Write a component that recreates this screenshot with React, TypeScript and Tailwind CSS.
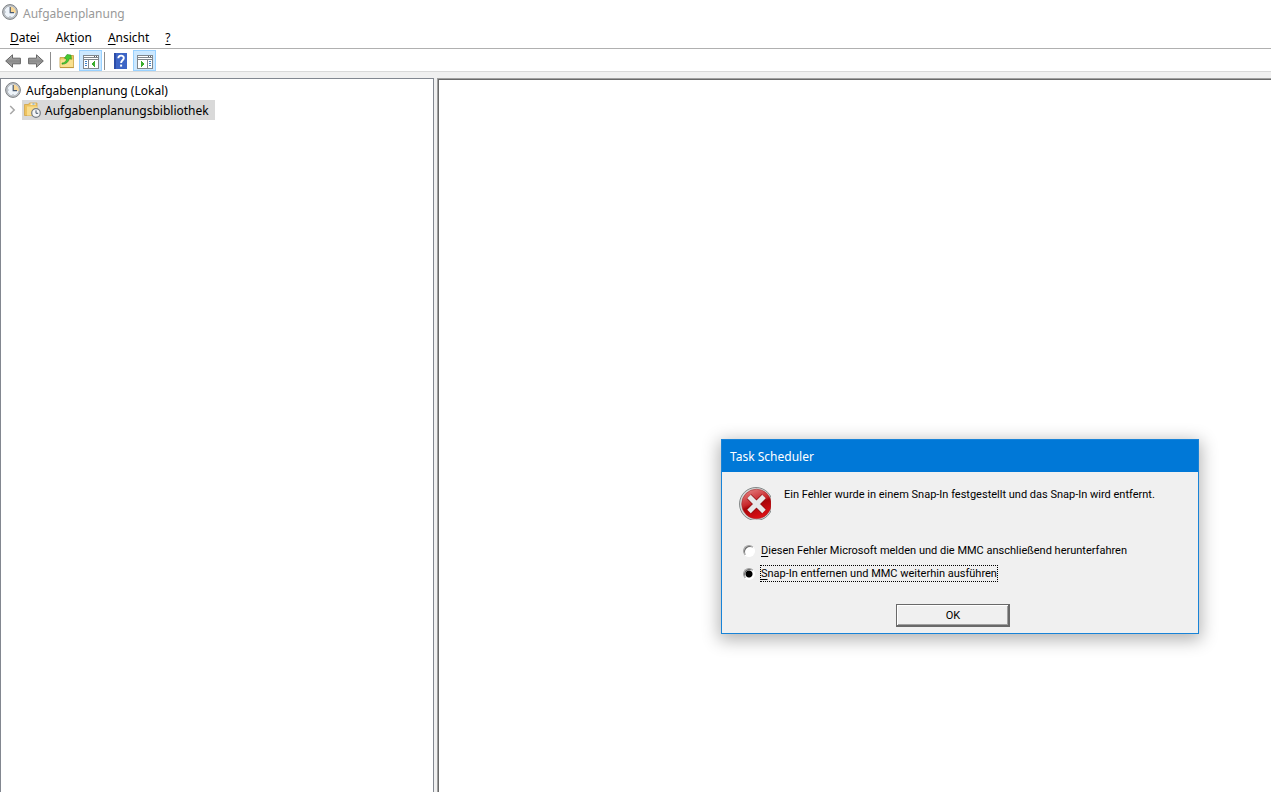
import { useState } from 'react'
import type { ReactNode } from 'react'

function ClockFace({ className }: { className?: string }) {
  return (
    <svg viewBox="0 0 16 16" className={className} aria-hidden="true">
      <circle cx="8" cy="8" r="7.4" fill="#c3c7ca" stroke="#7d8185" strokeWidth="1" />
      <circle cx="8" cy="8" r="5.9" fill="#eef4fa" stroke="#9aa0a6" strokeWidth="0.6" />
      <path d="M8 9V2.4A5.8 5.8 0 0 1 13.7 9Z" fill="#f9d796" />
      <path d="M8.2 3v5.7h3.8" fill="none" stroke="#4a5a70" strokeWidth="1.2" />
      <path d="M8 12.2v1M2.7 8h1" stroke="#7d858d" strokeWidth="0.8" />
    </svg>
  )
}

function ArrowIcon({ flip }: { flip?: boolean }) {
  return (
    <svg viewBox="0 0 16 14" className={flip ? 'w-4 h-3.5 -scale-x-100' : 'w-4 h-3.5'} aria-hidden="true">
      <defs>
        <linearGradient id="arrow" x1="0" y1="0" x2="0" y2="1">
          <stop offset="0" stopColor="#c4c4c4" />
          <stop offset="0.5" stopColor="#8a8a8a" />
          <stop offset="1" stopColor="#b0b0b0" />
        </linearGradient>
      </defs>
      <path d="M0.7 7L7.5 0.8V4.2H15.4V9.8H7.5V13.2Z" fill="url(#arrow)" stroke="#666" strokeWidth="1" />
    </svg>
  )
}

function FolderUpIcon() {
  return (
    <svg viewBox="0 0 16 16" className="w-4 h-4" aria-hidden="true">
      <path d="M1 4.5h6l1-2h6.5v12H1Z" fill="#ecc762" stroke="#c39a3a" strokeWidth="0.8" />
      <path d="M1.4 6.5h12.8v7.6H1.4Z" fill="#f9e08f" />
      <path d="M1 14.6h13.8" stroke="#b98f35" strokeWidth="0.8" />
      <path d="M3 10c2.6 0 4-1.4 4.6-4L5.4 5.2 8 1.5l4 .6.4 4.2-2-.8C9.6 9 7.2 11.2 3 11.2Z" fill="#45c932" stroke="#2c9422" strokeWidth="0.6" />
    </svg>
  )
}

function PaneIcon({ side }: { side: 'left' | 'right' }) {
  return (
    <svg viewBox="0 0 16 14" className="w-4 h-3.5" shapeRendering="crispEdges" aria-hidden="true">
      <path d="M0 0h16v14H0Z" fill="#80868c" />
      <path d="M1 1h14v1H1ZM1 3h14v1H1Z" fill="#fff" />
      <path d="M11 1h1v1h-1ZM13 1h1v1h-1Z" fill="#5b6168" />
      {side === 'left' ? (
        <>
          <path d="M1 5h4v8H1ZM6 5h9v8H6Z" fill="#fff" />
          <path d="M2 6h2v1H2ZM2 8h2v1H2ZM2 10h2v1H2Z" fill="#3e82c8" />
          <path d="M12 6v6L8 9Z" fill="#39ad2c" />
        </>
      ) : (
        <>
          <path d="M1 5h9v8H1ZM11 5h4v8h-4Z" fill="#fff" />
          <path d="M12 6h2v1h-2ZM12 8h2v1h-2ZM12 10h2v1h-2Z" fill="#3e82c8" />
          <path d="M4 6v6L8 9Z" fill="#39ad2c" />
        </>
      )}
    </svg>
  )
}

function HelpIcon() {
  return (
    <svg viewBox="0 0 13 16" className="w-[13px] h-4" aria-hidden="true">
      <path d="M0 0h13v16H0Z" fill="#2c4da8" />
      <path d="M2 0h11v16H2Z" fill="#3d65c6" />
      <path d="M4.3 5.2C4.4 1.9 9.8 1.8 9.8 5c0 2.2-2.7 2.3-2.7 5" fill="none" stroke="#fff" strokeWidth="1.9" />
      <path d="M6.1 11.6h2v2h-2Z" fill="#fff" />
    </svg>
  )
}

function LibraryIcon() {
  return (
    <svg viewBox="0 0 17 16" className="w-[17px] h-4" aria-hidden="true">
      <path d="M0.5 2.5h4l1-1.5h7.5v12.5H0.5Z" fill="#eec35f" stroke="#d3a546" strokeWidth="0.8" />
      <path d="M6.5 1.5h5v1.2h-5Z" fill="#fff" />
      <path d="M8.5 1.5h2v1h-2Z" fill="#4b9be0" />
      <path d="M3 4.5h10.5v9H3Z" fill="#f9dc8c" />
      <circle cx="12" cy="11" r="4.3" fill="#f4f6f8" stroke="#757c83" strokeWidth="1.2" />
      <path d="M12 8.3V11.3h2.2" fill="none" stroke="#44566a" strokeWidth="1" />
    </svg>
  )
}

function ErrorIcon() {
  return (
    <svg viewBox="0 0 32 33" className="w-8 h-[33px] shrink-0" aria-hidden="true">
      <defs>
        <linearGradient id="red" x1="0.2" y1="0" x2="0.6" y2="1">
          <stop offset="0" stopColor="#e58080" />
          <stop offset="0.45" stopColor="#c8282c" />
          <stop offset="0.55" stopColor="#a90509" />
          <stop offset="1" stopColor="#e01015" />
        </linearGradient>
      </defs>
      <circle cx="17" cy="17" r="16.5" fill="#d4d6d6" stroke="#858989" strokeWidth="1" />
      <circle cx="17.5" cy="17" r="14.8" fill="url(#red)" stroke="#a52b2d" strokeWidth="0.6" />
      <path d="M10 9.5L25 24.5M25 9.5L10 24.5" stroke="#8e1114" strokeWidth="6.4" />
      <path d="M10 9.5L25 24.5M25 9.5L10 24.5" stroke="#e8e8e8" strokeWidth="5" />
    </svg>
  )
}

function ToolButton({ label, active, children }: { label: string; active?: boolean; children: ReactNode }) {
  return (
    <button
      type="button"
      aria-label={label}
      className={
        active
          ? 'flex h-[21px] w-[23px] items-center justify-center border border-[#99d1ff] bg-[#cce8ff] pt-0.5'
          : 'flex h-[21px] w-[23px] items-center justify-center'
      }
    >
      {children}
    </button>
  )
}

const options = [
  { id: 'report', key: 'D', rest: 'iesen Fehler Microsoft melden und die MMC anschließend herunterfahren' },
  { id: 'remove', key: 'S', rest: 'nap-In entfernen und MMC weiterhin ausführen' },
]

function ErrorDialog() {
  const [choice, setChoice] = useState('remove')

  return (
    <section
      role="dialog"
      aria-labelledby="dialog-title"
      className="absolute left-[721px] top-[439px] w-[478px] border border-[#1883d7] bg-[#f0f0f0] shadow-[0_4px_16px_2px_rgba(0,0,0,0.3)]"
    >
      <h2 id="dialog-title" className="flex h-8 items-center bg-[#0078d7] px-2 pt-0.5 text-[12px] text-white">
        Task Scheduler
      </h2>
      <form
        className="flex flex-col px-[17px] pt-[15px] pb-1.5 font-[Roboto,Arial,sans-serif] text-[11px] leading-[15px]"
        onSubmit={e => e.preventDefault()}
      >
        <div className="flex gap-[13px]">
          <ErrorIcon />
          <p>Ein Fehler wurde in einem Snap-In festgestellt und das Snap-In wird entfernt.</p>
        </div>
        <div className="mt-[22px] flex flex-col items-start gap-1.5 pl-1">
          {options.map(o => (
            <label key={o.id} className="flex items-center gap-[5px]">
              <input
                type="radio"
                name="action"
                checked={choice === o.id}
                onChange={() => setChoice(o.id)}
                className="h-3 w-3 appearance-none rounded-full border border-t-[#a0a0a0] border-l-[#a0a0a0] border-r-white border-b-white bg-white shadow-[inset_1px_1px_0_#696969] checked:bg-[radial-gradient(circle,#000_3px,#fff_4px)]"
              />
              <span
                className={choice === o.id ? 'border border-dotted border-black' : 'border border-transparent'}
              >
                <u className="underline-offset-2">{o.key}</u>
                {o.rest}
              </span>
            </label>
          ))}
        </div>
        <button
          type="submit"
          className="mt-[22px] ml-[157px] h-[23px] w-[114px] border border-[#696969] shadow-[inset_-1px_-1px_0_#696969,inset_1px_1px_0_#fff,inset_-2px_-2px_0_#a0a0a0]"
        >
          OK
        </button>
      </form>
    </section>
  )
}

export default function App() {
  return (
    <div className="relative flex min-h-screen flex-col overflow-hidden bg-white font-['Noto_Sans','Open_Sans',sans-serif] text-[12px] text-black">
      <header className="flex h-7 items-center gap-[5px] px-0.5">
        <ClockFace className="mb-1 h-4 w-4" />
        <h1 className="text-[#999]">Aufgabenplanung</h1>
      </header>

      <nav className="flex h-5 items-center gap-4 px-2.5">
        <button type="button"><u className="underline-offset-2">D</u>atei</button>
        <button type="button">Ak<u className="underline-offset-2">t</u>ion</button>
        <button type="button"><u className="underline-offset-2">A</u>nsicht</button>
        <button type="button"><u className="underline-offset-2">?</u></button>
      </nav>

      <div className="flex h-6 items-center border-t border-b border-t-[#b0b0b0] border-b-[#d9d9d9] pt-px pl-px">
        <ToolButton label="Zurück"><ArrowIcon /></ToolButton>
        <ToolButton label="Vorwärts"><ArrowIcon flip /></ToolButton>
        <span className="mr-1 ml-[3px] h-[18px] w-px bg-[#8d8d8d]" />
        <ToolButton label="Eine Ebene nach oben"><FolderUpIcon /></ToolButton>
        <span className="w-px" />
        <ToolButton label="Konsolenstruktur ein-/ausblenden" active><PaneIcon side="left" /></ToolButton>
        <span className="mr-1 ml-0.5 h-[18px] w-px bg-[#8d8d8d]" />
        <ToolButton label="Hilfe"><HelpIcon /></ToolButton>
        <span className="w-px" />
        <ToolButton label="Aktionsbereich ein-/ausblenden" active><PaneIcon side="right" /></ToolButton>
      </div>

      <main className="flex grow gap-[3px] bg-[#f0f0f0] pt-1.5">
        <aside className="w-[434px] shrink-0 border border-b-0 border-[#828790] bg-white pt-px">
          <ul>
            <li className="flex h-5 items-center gap-[5px] pl-1">
              <ClockFace className="h-4 w-4" />
              <span className="pt-0.5">Aufgabenplanung (Lokal)</span>
            </li>
            <li className="flex h-5 items-center pl-2">
              <svg viewBox="0 0 7 10" className="mr-1.5 h-2.5 w-[7px]" aria-hidden="true">
                <path d="M1.2 1l4 4-4 4" fill="none" stroke="#a6a6a6" strokeWidth="1.5" />
              </svg>
              <span className="flex h-5 items-center gap-1 bg-[#d9d9d9] pr-1.5 pl-0.5">
                <LibraryIcon />
                <span className="pt-0.5">Aufgabenplanungsbibliothek</span>
              </span>
            </li>
          </ul>
        </aside>
        <div className="grow border-t border-l border-[#a0a0a0] bg-white shadow-[inset_1px_1px_0_#696969]" />
      </main>

      <ErrorDialog />
    </div>
  )
}
